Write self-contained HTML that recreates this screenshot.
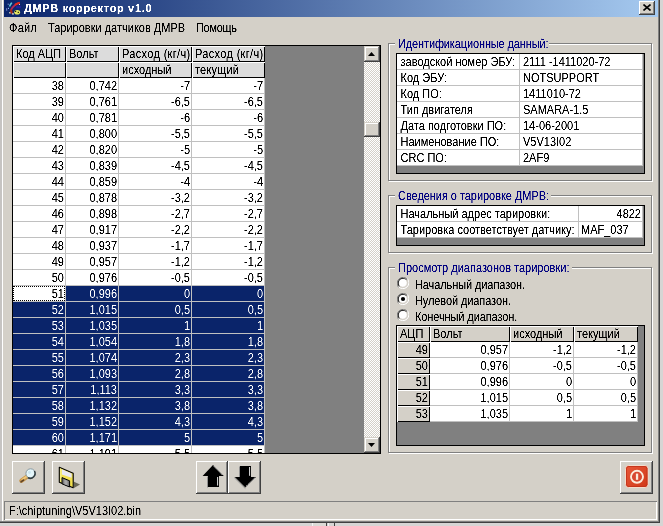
<!DOCTYPE html>
<html><head><meta charset="utf-8"><style>
html,body{margin:0;padding:0}
body{width:663px;height:526px;overflow:hidden;position:relative;background:#D4D0C8;font-family:"Liberation Sans",sans-serif;font-size:11px;color:#000}
div,svg{position:absolute}
.t{white-space:nowrap;transform:scaleY(1.12);transform-origin:0 3.5px}
.nt{transform:none}
</style></head><body>
<svg width="0" height="0" style="position:absolute;left:0;top:0"><filter id="crisp" x="0" y="0" width="100%" height="100%"><feComponentTransfer><feFuncA type="linear" slope="2.5" intercept="-0.6"/></feComponentTransfer></filter><filter id="crispw" x="0" y="0" width="100%" height="100%"><feComponentTransfer><feFuncA type="linear" slope="1.6" intercept="-0.35"/></feComponentTransfer></filter></svg>
<div style="left:0px;top:0px;width:2px;height:526px;background:#C6C4C2"></div>
<div style="left:2px;top:0px;width:1px;height:521px;background:#FFFFFF"></div>
<div style="left:658px;top:0px;width:1px;height:522px;background:#808080"></div>
<div style="left:659px;top:0px;width:1px;height:523px;background:#404040"></div>
<div style="left:0px;top:521px;width:659px;height:1px;background:#808080"></div>
<div style="left:0px;top:522px;width:660px;height:1px;background:#404040"></div>
<div style="left:660px;top:0px;width:3px;height:526px;background:#D6D5D4"></div>
<div style="left:0px;top:523px;width:663px;height:3px;background:#D6D5D4"></div>
<div style="left:312px;top:523px;width:1px;height:3px;background:#F4F4F4"></div>
<div style="left:313px;top:523px;width:13px;height:3px;background:#DCDAD6"></div>
<div style="left:326px;top:523px;width:1px;height:3px;background:#404040"></div>
<div style="left:328px;top:523px;width:1px;height:3px;background:#F4F4F4"></div>
<div style="left:334px;top:523px;width:1px;height:3px;background:#404040"></div>
<div style="left:4px;top:0px;width:654px;height:17px;background:linear-gradient(to right,#0A246A,#A6CAF0)"></div>
<svg style="position:absolute;left:5px;top:1px" width="16" height="15" viewBox="0 0 16 15">
<path d="M6.8 1.6 L5.5 3.5 L4.5 5.5" stroke="#60C8D8" stroke-width="1.6" fill="none"/>
<rect x="2.7" y="2.7" width="1" height="1" fill="#A0C0F0"/>
<rect x="3" y="6.8" width="1" height="1.2" fill="#90B0E8"/>
<rect x="1.2" y="7.2" width="1" height="2.5" fill="#8090D8"/>
<rect x="11" y="5" width="5" height="2.2" fill="#20209A"/>
<path d="M14.5 1.8 C12 2.5 9.5 4 7.6 6.4 C6 8.5 5.6 10.5 6.8 11.6" stroke="#B02858" stroke-width="1.8" fill="none"/>
<path d="M14.8 1.8 C13 2 11.5 2.8 10 3.8" stroke="#E02818" stroke-width="2" fill="none"/>
<path d="M6.2 8.5 C5.6 10.5 6.2 11.5 7.4 12.2" stroke="#A02818" stroke-width="2.2" fill="none"/>
<ellipse cx="12.2" cy="11.2" rx="2.9" ry="2.3" fill="#E8E860"/>
<rect x="10" y="9.8" width="1.2" height="1.2" fill="#202000"/>
<rect x="12.7" y="10.8" width="1.2" height="1.2" fill="#202000"/>
<path d="M4.2 11.5 L5.5 12.3 M7 12.8 L9 13" stroke="#F0F0D0" stroke-width="1.2" fill="none"/>
<rect x="14" y="3" width="1" height="1" fill="#D0E0F0"/>
</svg>
<div style="left:639px;top:1px;width:16px;height:14px;background:#D4D0C8;box-shadow:inset -1px -1px #404040,inset 1px 1px #fff,inset -2px -2px #808080"></div>
<svg style="position:absolute;left:643px;top:4px" width="8" height="7" viewBox="0 0 8 7">
<path d="M0.5 0.5 L7.5 6.5 M7.5 0.5 L0.5 6.5" stroke="#000" stroke-width="1.6"/>
</svg>
<div style="left:12px;top:45px;width:369px;height:409px;background:#808080;border:1px solid #000;box-sizing:border-box"></div>
<div style="left:13px;top:46px;width:53px;height:16px;background:#DCDCDC;box-shadow:inset 1px 1px #fff,inset -1px -1px #000"></div>
<div style="left:66px;top:46px;width:53px;height:16px;background:#DCDCDC;box-shadow:inset 1px 1px #fff,inset -1px -1px #000"></div>
<div style="left:119px;top:46px;width:73px;height:16px;background:#DCDCDC;box-shadow:inset 1px 1px #fff,inset -1px -1px #000"></div>
<div style="left:192px;top:46px;width:73px;height:16px;background:#DCDCDC;box-shadow:inset 1px 1px #fff,inset -1px -1px #000"></div>
<div style="left:13px;top:62px;width:53px;height:16px;background:#DCDCDC;box-shadow:inset 1px 1px #fff,inset -1px -1px #000"></div>
<div style="left:66px;top:62px;width:53px;height:16px;background:#DCDCDC;box-shadow:inset 1px 1px #fff,inset -1px -1px #000"></div>
<div style="left:119px;top:62px;width:73px;height:16px;background:#DCDCDC;box-shadow:inset 1px 1px #fff,inset -1px -1px #000"></div>
<div style="left:192px;top:62px;width:73px;height:16px;background:#DCDCDC;box-shadow:inset 1px 1px #fff,inset -1px -1px #000"></div>
<div style="left:13px;top:78px;width:252px;height:375px;overflow:hidden">
<div style="left:0px;top:0px;width:53px;height:16px;background:#fff;box-shadow:inset -1px -1px #C0C0C0"></div>
<div style="left:53px;top:0px;width:53px;height:16px;background:#fff;box-shadow:inset -1px -1px #C0C0C0"></div>
<div style="left:106px;top:0px;width:73px;height:16px;background:#fff;box-shadow:inset -1px -1px #C0C0C0"></div>
<div style="left:179px;top:0px;width:73px;height:16px;background:#fff;box-shadow:inset -1px -1px #C0C0C0"></div>
<div style="left:0px;top:16px;width:53px;height:16px;background:#fff;box-shadow:inset -1px -1px #C0C0C0"></div>
<div style="left:53px;top:16px;width:53px;height:16px;background:#fff;box-shadow:inset -1px -1px #C0C0C0"></div>
<div style="left:106px;top:16px;width:73px;height:16px;background:#fff;box-shadow:inset -1px -1px #C0C0C0"></div>
<div style="left:179px;top:16px;width:73px;height:16px;background:#fff;box-shadow:inset -1px -1px #C0C0C0"></div>
<div style="left:0px;top:32px;width:53px;height:16px;background:#fff;box-shadow:inset -1px -1px #C0C0C0"></div>
<div style="left:53px;top:32px;width:53px;height:16px;background:#fff;box-shadow:inset -1px -1px #C0C0C0"></div>
<div style="left:106px;top:32px;width:73px;height:16px;background:#fff;box-shadow:inset -1px -1px #C0C0C0"></div>
<div style="left:179px;top:32px;width:73px;height:16px;background:#fff;box-shadow:inset -1px -1px #C0C0C0"></div>
<div style="left:0px;top:48px;width:53px;height:16px;background:#fff;box-shadow:inset -1px -1px #C0C0C0"></div>
<div style="left:53px;top:48px;width:53px;height:16px;background:#fff;box-shadow:inset -1px -1px #C0C0C0"></div>
<div style="left:106px;top:48px;width:73px;height:16px;background:#fff;box-shadow:inset -1px -1px #C0C0C0"></div>
<div style="left:179px;top:48px;width:73px;height:16px;background:#fff;box-shadow:inset -1px -1px #C0C0C0"></div>
<div style="left:0px;top:64px;width:53px;height:16px;background:#fff;box-shadow:inset -1px -1px #C0C0C0"></div>
<div style="left:53px;top:64px;width:53px;height:16px;background:#fff;box-shadow:inset -1px -1px #C0C0C0"></div>
<div style="left:106px;top:64px;width:73px;height:16px;background:#fff;box-shadow:inset -1px -1px #C0C0C0"></div>
<div style="left:179px;top:64px;width:73px;height:16px;background:#fff;box-shadow:inset -1px -1px #C0C0C0"></div>
<div style="left:0px;top:80px;width:53px;height:16px;background:#fff;box-shadow:inset -1px -1px #C0C0C0"></div>
<div style="left:53px;top:80px;width:53px;height:16px;background:#fff;box-shadow:inset -1px -1px #C0C0C0"></div>
<div style="left:106px;top:80px;width:73px;height:16px;background:#fff;box-shadow:inset -1px -1px #C0C0C0"></div>
<div style="left:179px;top:80px;width:73px;height:16px;background:#fff;box-shadow:inset -1px -1px #C0C0C0"></div>
<div style="left:0px;top:96px;width:53px;height:16px;background:#fff;box-shadow:inset -1px -1px #C0C0C0"></div>
<div style="left:53px;top:96px;width:53px;height:16px;background:#fff;box-shadow:inset -1px -1px #C0C0C0"></div>
<div style="left:106px;top:96px;width:73px;height:16px;background:#fff;box-shadow:inset -1px -1px #C0C0C0"></div>
<div style="left:179px;top:96px;width:73px;height:16px;background:#fff;box-shadow:inset -1px -1px #C0C0C0"></div>
<div style="left:0px;top:112px;width:53px;height:16px;background:#fff;box-shadow:inset -1px -1px #C0C0C0"></div>
<div style="left:53px;top:112px;width:53px;height:16px;background:#fff;box-shadow:inset -1px -1px #C0C0C0"></div>
<div style="left:106px;top:112px;width:73px;height:16px;background:#fff;box-shadow:inset -1px -1px #C0C0C0"></div>
<div style="left:179px;top:112px;width:73px;height:16px;background:#fff;box-shadow:inset -1px -1px #C0C0C0"></div>
<div style="left:0px;top:128px;width:53px;height:16px;background:#fff;box-shadow:inset -1px -1px #C0C0C0"></div>
<div style="left:53px;top:128px;width:53px;height:16px;background:#fff;box-shadow:inset -1px -1px #C0C0C0"></div>
<div style="left:106px;top:128px;width:73px;height:16px;background:#fff;box-shadow:inset -1px -1px #C0C0C0"></div>
<div style="left:179px;top:128px;width:73px;height:16px;background:#fff;box-shadow:inset -1px -1px #C0C0C0"></div>
<div style="left:0px;top:144px;width:53px;height:16px;background:#fff;box-shadow:inset -1px -1px #C0C0C0"></div>
<div style="left:53px;top:144px;width:53px;height:16px;background:#fff;box-shadow:inset -1px -1px #C0C0C0"></div>
<div style="left:106px;top:144px;width:73px;height:16px;background:#fff;box-shadow:inset -1px -1px #C0C0C0"></div>
<div style="left:179px;top:144px;width:73px;height:16px;background:#fff;box-shadow:inset -1px -1px #C0C0C0"></div>
<div style="left:0px;top:160px;width:53px;height:16px;background:#fff;box-shadow:inset -1px -1px #C0C0C0"></div>
<div style="left:53px;top:160px;width:53px;height:16px;background:#fff;box-shadow:inset -1px -1px #C0C0C0"></div>
<div style="left:106px;top:160px;width:73px;height:16px;background:#fff;box-shadow:inset -1px -1px #C0C0C0"></div>
<div style="left:179px;top:160px;width:73px;height:16px;background:#fff;box-shadow:inset -1px -1px #C0C0C0"></div>
<div style="left:0px;top:176px;width:53px;height:16px;background:#fff;box-shadow:inset -1px -1px #C0C0C0"></div>
<div style="left:53px;top:176px;width:53px;height:16px;background:#fff;box-shadow:inset -1px -1px #C0C0C0"></div>
<div style="left:106px;top:176px;width:73px;height:16px;background:#fff;box-shadow:inset -1px -1px #C0C0C0"></div>
<div style="left:179px;top:176px;width:73px;height:16px;background:#fff;box-shadow:inset -1px -1px #C0C0C0"></div>
<div style="left:0px;top:192px;width:53px;height:16px;background:#fff;box-shadow:inset -1px -1px #C0C0C0"></div>
<div style="left:53px;top:192px;width:53px;height:16px;background:#fff;box-shadow:inset -1px -1px #C0C0C0"></div>
<div style="left:106px;top:192px;width:73px;height:16px;background:#fff;box-shadow:inset -1px -1px #C0C0C0"></div>
<div style="left:179px;top:192px;width:73px;height:16px;background:#fff;box-shadow:inset -1px -1px #C0C0C0"></div>
<div style="left:0px;top:208px;width:53px;height:16px;background:#fff;box-shadow:inset -1px -1px #C0C0C0"></div>
<div style="left:0px;top:208px;width:52px;height:15px;border:1px dotted #000;box-sizing:border-box"></div>
<div style="left:53px;top:208px;width:53px;height:16px;background:#0A246A;box-shadow:inset -1px -1px #C0C0C0"></div>
<div style="left:106px;top:208px;width:73px;height:16px;background:#0A246A;box-shadow:inset -1px -1px #C0C0C0"></div>
<div style="left:179px;top:208px;width:73px;height:16px;background:#0A246A;box-shadow:inset -1px -1px #C0C0C0"></div>
<div style="left:0px;top:224px;width:53px;height:16px;background:#0A246A;box-shadow:inset -1px -1px #C0C0C0"></div>
<div style="left:53px;top:224px;width:53px;height:16px;background:#0A246A;box-shadow:inset -1px -1px #C0C0C0"></div>
<div style="left:106px;top:224px;width:73px;height:16px;background:#0A246A;box-shadow:inset -1px -1px #C0C0C0"></div>
<div style="left:179px;top:224px;width:73px;height:16px;background:#0A246A;box-shadow:inset -1px -1px #C0C0C0"></div>
<div style="left:0px;top:240px;width:53px;height:16px;background:#0A246A;box-shadow:inset -1px -1px #C0C0C0"></div>
<div style="left:53px;top:240px;width:53px;height:16px;background:#0A246A;box-shadow:inset -1px -1px #C0C0C0"></div>
<div style="left:106px;top:240px;width:73px;height:16px;background:#0A246A;box-shadow:inset -1px -1px #C0C0C0"></div>
<div style="left:179px;top:240px;width:73px;height:16px;background:#0A246A;box-shadow:inset -1px -1px #C0C0C0"></div>
<div style="left:0px;top:256px;width:53px;height:16px;background:#0A246A;box-shadow:inset -1px -1px #C0C0C0"></div>
<div style="left:53px;top:256px;width:53px;height:16px;background:#0A246A;box-shadow:inset -1px -1px #C0C0C0"></div>
<div style="left:106px;top:256px;width:73px;height:16px;background:#0A246A;box-shadow:inset -1px -1px #C0C0C0"></div>
<div style="left:179px;top:256px;width:73px;height:16px;background:#0A246A;box-shadow:inset -1px -1px #C0C0C0"></div>
<div style="left:0px;top:272px;width:53px;height:16px;background:#0A246A;box-shadow:inset -1px -1px #C0C0C0"></div>
<div style="left:53px;top:272px;width:53px;height:16px;background:#0A246A;box-shadow:inset -1px -1px #C0C0C0"></div>
<div style="left:106px;top:272px;width:73px;height:16px;background:#0A246A;box-shadow:inset -1px -1px #C0C0C0"></div>
<div style="left:179px;top:272px;width:73px;height:16px;background:#0A246A;box-shadow:inset -1px -1px #C0C0C0"></div>
<div style="left:0px;top:288px;width:53px;height:16px;background:#0A246A;box-shadow:inset -1px -1px #C0C0C0"></div>
<div style="left:53px;top:288px;width:53px;height:16px;background:#0A246A;box-shadow:inset -1px -1px #C0C0C0"></div>
<div style="left:106px;top:288px;width:73px;height:16px;background:#0A246A;box-shadow:inset -1px -1px #C0C0C0"></div>
<div style="left:179px;top:288px;width:73px;height:16px;background:#0A246A;box-shadow:inset -1px -1px #C0C0C0"></div>
<div style="left:0px;top:304px;width:53px;height:16px;background:#0A246A;box-shadow:inset -1px -1px #C0C0C0"></div>
<div style="left:53px;top:304px;width:53px;height:16px;background:#0A246A;box-shadow:inset -1px -1px #C0C0C0"></div>
<div style="left:106px;top:304px;width:73px;height:16px;background:#0A246A;box-shadow:inset -1px -1px #C0C0C0"></div>
<div style="left:179px;top:304px;width:73px;height:16px;background:#0A246A;box-shadow:inset -1px -1px #C0C0C0"></div>
<div style="left:0px;top:320px;width:53px;height:16px;background:#0A246A;box-shadow:inset -1px -1px #C0C0C0"></div>
<div style="left:53px;top:320px;width:53px;height:16px;background:#0A246A;box-shadow:inset -1px -1px #C0C0C0"></div>
<div style="left:106px;top:320px;width:73px;height:16px;background:#0A246A;box-shadow:inset -1px -1px #C0C0C0"></div>
<div style="left:179px;top:320px;width:73px;height:16px;background:#0A246A;box-shadow:inset -1px -1px #C0C0C0"></div>
<div style="left:0px;top:336px;width:53px;height:16px;background:#0A246A;box-shadow:inset -1px -1px #C0C0C0"></div>
<div style="left:53px;top:336px;width:53px;height:16px;background:#0A246A;box-shadow:inset -1px -1px #C0C0C0"></div>
<div style="left:106px;top:336px;width:73px;height:16px;background:#0A246A;box-shadow:inset -1px -1px #C0C0C0"></div>
<div style="left:179px;top:336px;width:73px;height:16px;background:#0A246A;box-shadow:inset -1px -1px #C0C0C0"></div>
<div style="left:0px;top:352px;width:53px;height:16px;background:#0A246A;box-shadow:inset -1px -1px #C0C0C0"></div>
<div style="left:53px;top:352px;width:53px;height:16px;background:#0A246A;box-shadow:inset -1px -1px #C0C0C0"></div>
<div style="left:106px;top:352px;width:73px;height:16px;background:#0A246A;box-shadow:inset -1px -1px #C0C0C0"></div>
<div style="left:179px;top:352px;width:73px;height:16px;background:#0A246A;box-shadow:inset -1px -1px #C0C0C0"></div>
<div style="left:0px;top:368px;width:53px;height:16px;background:#fff;box-shadow:inset -1px -1px #C0C0C0"></div>
<div style="left:53px;top:368px;width:53px;height:16px;background:#fff;box-shadow:inset -1px -1px #C0C0C0"></div>
<div style="left:106px;top:368px;width:73px;height:16px;background:#fff;box-shadow:inset -1px -1px #C0C0C0"></div>
<div style="left:179px;top:368px;width:73px;height:16px;background:#fff;box-shadow:inset -1px -1px #C0C0C0"></div>
</div>
<div style="left:364px;top:46px;width:16px;height:407px;background-color:#fff;background-image:conic-gradient(#D4D0C8 25%,#fff 0 50%,#D4D0C8 0 75%,#fff 0);background-size:2px 2px"></div>
<div style="left:364px;top:46px;width:16px;height:16px;background:#D4D0C8;box-shadow:inset -1px -1px #404040,inset 1px 1px #D4D0C8,inset -2px -2px #808080,inset 2px 2px #fff"></div>
<svg style="position:absolute;left:368px;top:52px" width="7" height="4"><path d="M3.5 0 L7 4 L0 4Z" fill="#000"/></svg>
<div style="left:364px;top:437px;width:16px;height:16px;background:#D4D0C8;box-shadow:inset -1px -1px #404040,inset 1px 1px #D4D0C8,inset -2px -2px #808080,inset 2px 2px #fff"></div>
<svg style="position:absolute;left:368px;top:443px" width="7" height="4"><path d="M0 0 L7 0 L3.5 4Z" fill="#000"/></svg>
<div style="left:364px;top:122px;width:16px;height:15px;background:#D4D0C8;box-shadow:inset -1px -1px #404040,inset 1px 1px #D4D0C8,inset -2px -2px #808080,inset 2px 2px #fff"></div>
<div style="left:388px;top:43px;width:264px;height:138px;border:1px solid #808080;box-sizing:border-box"></div>
<div style="left:389px;top:44px;width:264px;height:138px;border:1px solid #fff;box-sizing:border-box"></div>
<div style="left:388px;top:44px;width:1px;height:136px;background:#808080"></div>
<div style="left:651px;top:43px;width:1px;height:138px;background:#808080"></div>
<div style="left:388px;top:43px;width:264px;height:1px;background:#808080"></div>
<div style="left:388px;top:180px;width:264px;height:1px;background:#808080"></div>
<div style="left:395px;top:37px;width:154px;height:14px;background:#D4D0C8"></div>
<div style="left:388px;top:195px;width:264px;height:58px;border:1px solid #808080;box-sizing:border-box"></div>
<div style="left:389px;top:196px;width:264px;height:58px;border:1px solid #fff;box-sizing:border-box"></div>
<div style="left:388px;top:196px;width:1px;height:56px;background:#808080"></div>
<div style="left:651px;top:195px;width:1px;height:58px;background:#808080"></div>
<div style="left:388px;top:195px;width:264px;height:1px;background:#808080"></div>
<div style="left:388px;top:252px;width:264px;height:1px;background:#808080"></div>
<div style="left:395px;top:189px;width:156px;height:14px;background:#D4D0C8"></div>
<div style="left:388px;top:267px;width:264px;height:186px;border:1px solid #808080;box-sizing:border-box"></div>
<div style="left:389px;top:268px;width:264px;height:186px;border:1px solid #fff;box-sizing:border-box"></div>
<div style="left:388px;top:268px;width:1px;height:184px;background:#808080"></div>
<div style="left:651px;top:267px;width:1px;height:186px;background:#808080"></div>
<div style="left:388px;top:267px;width:264px;height:1px;background:#808080"></div>
<div style="left:388px;top:452px;width:264px;height:1px;background:#808080"></div>
<div style="left:395px;top:261px;width:177px;height:14px;background:#D4D0C8"></div>
<div style="left:396px;top:53px;width:249px;height:121px;background:#808080;border:1px solid #000;box-sizing:border-box"></div>
<div style="left:397px;top:54px;width:123px;height:16px;background:#fff;box-shadow:inset -1px -1px #C0C0C0"></div>
<div style="left:520px;top:54px;width:123px;height:16px;background:#fff;box-shadow:inset -1px -1px #C0C0C0"></div>
<div style="left:397px;top:70px;width:123px;height:16px;background:#fff;box-shadow:inset -1px -1px #C0C0C0"></div>
<div style="left:520px;top:70px;width:123px;height:16px;background:#fff;box-shadow:inset -1px -1px #C0C0C0"></div>
<div style="left:397px;top:86px;width:123px;height:16px;background:#fff;box-shadow:inset -1px -1px #C0C0C0"></div>
<div style="left:520px;top:86px;width:123px;height:16px;background:#fff;box-shadow:inset -1px -1px #C0C0C0"></div>
<div style="left:397px;top:102px;width:123px;height:16px;background:#fff;box-shadow:inset -1px -1px #C0C0C0"></div>
<div style="left:520px;top:102px;width:123px;height:16px;background:#fff;box-shadow:inset -1px -1px #C0C0C0"></div>
<div style="left:397px;top:118px;width:123px;height:16px;background:#fff;box-shadow:inset -1px -1px #C0C0C0"></div>
<div style="left:520px;top:118px;width:123px;height:16px;background:#fff;box-shadow:inset -1px -1px #C0C0C0"></div>
<div style="left:397px;top:134px;width:123px;height:16px;background:#fff;box-shadow:inset -1px -1px #C0C0C0"></div>
<div style="left:520px;top:134px;width:123px;height:16px;background:#fff;box-shadow:inset -1px -1px #C0C0C0"></div>
<div style="left:397px;top:150px;width:123px;height:16px;background:#fff;box-shadow:inset -1px -1px #C0C0C0"></div>
<div style="left:520px;top:150px;width:123px;height:16px;background:#fff;box-shadow:inset -1px -1px #C0C0C0"></div>
<div style="left:396px;top:205px;width:249px;height:41px;background:#808080;border:1px solid #000;box-sizing:border-box"></div>
<div style="left:397px;top:206px;width:182px;height:16px;background:#fff;box-shadow:inset -1px -1px #C0C0C0"></div>
<div style="left:579px;top:206px;width:64px;height:16px;background:#fff;box-shadow:inset -1px -1px #C0C0C0"></div>
<div style="left:397px;top:222px;width:182px;height:16px;background:#fff;box-shadow:inset -1px -1px #C0C0C0"></div>
<div style="left:579px;top:222px;width:64px;height:16px;background:#fff;box-shadow:inset -1px -1px #C0C0C0"></div>
<svg style="position:absolute;left:397px;top:277px" width="12" height="12" viewBox="0 0 12 12">
<path d="M10.5 2.3 A5.5 5.5 0 0 0 1.7 10.5" stroke="#808080" stroke-width="1" fill="none"/>
<path d="M9.5 3 A4.5 4.5 0 0 0 2.5 9.5" stroke="#303030" stroke-width="1.2" fill="none"/>
<circle cx="6" cy="6" r="4" fill="#fff"/>
<path d="M1.5 9.7 A5.5 5.5 0 0 0 10.3 1.5" stroke="#fff" stroke-width="1" fill="none"/>
<path d="M2.5 9 A4.5 4.5 0 0 0 9 2.5" stroke="#D4D0C8" stroke-width="1" fill="none"/>

</svg>
<svg style="position:absolute;left:397px;top:293px" width="12" height="12" viewBox="0 0 12 12">
<path d="M10.5 2.3 A5.5 5.5 0 0 0 1.7 10.5" stroke="#808080" stroke-width="1" fill="none"/>
<path d="M9.5 3 A4.5 4.5 0 0 0 2.5 9.5" stroke="#303030" stroke-width="1.2" fill="none"/>
<circle cx="6" cy="6" r="4" fill="#fff"/>
<path d="M1.5 9.7 A5.5 5.5 0 0 0 10.3 1.5" stroke="#fff" stroke-width="1" fill="none"/>
<path d="M2.5 9 A4.5 4.5 0 0 0 9 2.5" stroke="#D4D0C8" stroke-width="1" fill="none"/>
<circle cx="6" cy="6" r="2.1" fill="#000"/>
</svg>
<svg style="position:absolute;left:397px;top:309px" width="12" height="12" viewBox="0 0 12 12">
<path d="M10.5 2.3 A5.5 5.5 0 0 0 1.7 10.5" stroke="#808080" stroke-width="1" fill="none"/>
<path d="M9.5 3 A4.5 4.5 0 0 0 2.5 9.5" stroke="#303030" stroke-width="1.2" fill="none"/>
<circle cx="6" cy="6" r="4" fill="#fff"/>
<path d="M1.5 9.7 A5.5 5.5 0 0 0 10.3 1.5" stroke="#fff" stroke-width="1" fill="none"/>
<path d="M2.5 9 A4.5 4.5 0 0 0 9 2.5" stroke="#D4D0C8" stroke-width="1" fill="none"/>

</svg>
<div style="left:396px;top:325px;width:249px;height:121px;background:#808080;border:1px solid #000;box-sizing:border-box"></div>
<div style="left:397px;top:326px;width:33px;height:16px;background:#D4D0C8;box-shadow:inset 1px 1px #fff,inset -1px -1px #000"></div>
<div style="left:430px;top:326px;width:80px;height:16px;background:#D4D0C8;box-shadow:inset 1px 1px #fff,inset -1px -1px #000"></div>
<div style="left:510px;top:326px;width:64px;height:16px;background:#D4D0C8;box-shadow:inset 1px 1px #fff,inset -1px -1px #000"></div>
<div style="left:574px;top:326px;width:64px;height:16px;background:#D4D0C8;box-shadow:inset 1px 1px #fff,inset -1px -1px #000"></div>
<div style="left:397px;top:342px;width:33px;height:16px;background:#D4D0C8;box-shadow:inset 1px 1px #fff,inset -1px -1px #000"></div>
<div style="left:430px;top:342px;width:80px;height:16px;background:#fff;box-shadow:inset -1px -1px #C0C0C0"></div>
<div style="left:510px;top:342px;width:64px;height:16px;background:#fff;box-shadow:inset -1px -1px #C0C0C0"></div>
<div style="left:574px;top:342px;width:64px;height:16px;background:#fff;box-shadow:inset -1px -1px #C0C0C0"></div>
<div style="left:397px;top:358px;width:33px;height:16px;background:#D4D0C8;box-shadow:inset 1px 1px #fff,inset -1px -1px #000"></div>
<div style="left:430px;top:358px;width:80px;height:16px;background:#fff;box-shadow:inset -1px -1px #C0C0C0"></div>
<div style="left:510px;top:358px;width:64px;height:16px;background:#fff;box-shadow:inset -1px -1px #C0C0C0"></div>
<div style="left:574px;top:358px;width:64px;height:16px;background:#fff;box-shadow:inset -1px -1px #C0C0C0"></div>
<div style="left:397px;top:374px;width:33px;height:16px;background:#D4D0C8;box-shadow:inset 1px 1px #fff,inset -1px -1px #000"></div>
<div style="left:430px;top:374px;width:80px;height:16px;background:#fff;box-shadow:inset -1px -1px #C0C0C0"></div>
<div style="left:510px;top:374px;width:64px;height:16px;background:#fff;box-shadow:inset -1px -1px #C0C0C0"></div>
<div style="left:574px;top:374px;width:64px;height:16px;background:#fff;box-shadow:inset -1px -1px #C0C0C0"></div>
<div style="left:397px;top:390px;width:33px;height:16px;background:#D4D0C8;box-shadow:inset 1px 1px #fff,inset -1px -1px #000"></div>
<div style="left:430px;top:390px;width:80px;height:16px;background:#fff;box-shadow:inset -1px -1px #C0C0C0"></div>
<div style="left:510px;top:390px;width:64px;height:16px;background:#fff;box-shadow:inset -1px -1px #C0C0C0"></div>
<div style="left:574px;top:390px;width:64px;height:16px;background:#fff;box-shadow:inset -1px -1px #C0C0C0"></div>
<div style="left:397px;top:406px;width:33px;height:16px;background:#D4D0C8;box-shadow:inset 1px 1px #fff,inset -1px -1px #000"></div>
<div style="left:430px;top:406px;width:80px;height:16px;background:#fff;box-shadow:inset -1px -1px #C0C0C0"></div>
<div style="left:510px;top:406px;width:64px;height:16px;background:#fff;box-shadow:inset -1px -1px #C0C0C0"></div>
<div style="left:574px;top:406px;width:64px;height:16px;background:#fff;box-shadow:inset -1px -1px #C0C0C0"></div>
<div style="left:12px;top:461px;width:33px;height:33px;background:#D4D0C8;box-shadow:inset -1px -1px #404040,inset 1px 1px #fff,inset -2px -2px #808080"></div>
<div style="left:52px;top:461px;width:33px;height:33px;background:#D4D0C8;box-shadow:inset -1px -1px #404040,inset 1px 1px #fff,inset -2px -2px #808080"></div>
<div style="left:196px;top:461px;width:32px;height:33px;background:#D4D0C8;box-shadow:inset -1px -1px #404040,inset 1px 1px #fff,inset -2px -2px #808080"></div>
<div style="left:228px;top:461px;width:33px;height:33px;background:#D4D0C8;box-shadow:inset -1px -1px #404040,inset 1px 1px #fff,inset -2px -2px #808080"></div>
<div style="left:620px;top:461px;width:33px;height:33px;background:#D4D0C8;box-shadow:inset -1px -1px #404040,inset 1px 1px #fff,inset -2px -2px #808080"></div>
<svg style="position:absolute;left:12px;top:461px" width="33" height="33" viewBox="0 0 33 33">
<path d="M9.4 19.8 L14.6 16" stroke="#C89850" stroke-width="4.4" stroke-linecap="round"/>
<path d="M10.4 18.6 L14.2 15.8" stroke="#F0C878" stroke-width="2" stroke-linecap="round"/>
<path d="M9 20.8 L11.6 19" stroke="#604428" stroke-width="1.6" stroke-linecap="round"/>
<circle cx="18.6" cy="12.5" r="4.7" fill="#E4F6FA" stroke="#8898A0" stroke-width="1"/>
<path d="M22.4 10 A4.9 4.9 0 0 1 16 16.8" stroke="#303c40" stroke-width="1.5" fill="none"/>
<circle cx="17.5" cy="11.5" r="1.4" fill="#B8D8E8" opacity="0.6"/>
</svg>
<svg style="position:absolute;left:52px;top:461px" width="33" height="33" viewBox="0 0 33 33">
<path d="M21.5 20.5 L28 23.5 L22 27Z" fill="#6A6858"/>
<path d="M7.3 6.3 L21.2 12.3 L21.2 26.8 L7.3 21.2Z" fill="#F2E050" stroke="#000" stroke-width="1.1" stroke-linejoin="round"/>
<path d="M9.8 8.2 L19.6 12.4 L19.6 16.8 L9.8 13.4Z" fill="#E8E8F4"/>
<path d="M8 7.2 L9.5 8 L9.5 21 L8 20.5Z" fill="#F8F080"/>
<path d="M10 16.6 L17.6 19.8 L17.6 26 L10 22.8Z" fill="#787878" stroke="#000" stroke-width="1"/>
<path d="M12.3 18.4 L15.6 19.8 L15.6 24.5 L12.3 23.2Z" fill="#A8A8A8"/>
</svg>
<svg style="position:absolute;left:196px;top:461px" width="32" height="33" viewBox="0 0 32 33">
<path d="M11.5 15.5 L11.5 26.5" stroke="#909090" stroke-width="1"/>
<path d="M6.6 15 L17 4 L27.8 15 L23 15 L23 26 L12 26 L12 15Z" fill="#000"/>
<path d="M17.6 5 L26.4 14" stroke="#fff" stroke-width="0.9" stroke-dasharray="1 0.6"/>
<path d="M21.6 16 L21.6 24.6" stroke="#fff" stroke-width="0.9"/>
</svg>
<svg style="position:absolute;left:228px;top:461px" width="33" height="33" viewBox="0 0 33 33">
<path d="M11.5 5.5 L11.5 16" stroke="#909090" stroke-width="1"/>
<path d="M6.2 16.5 L17.3 27.5" stroke="#909090" stroke-width="1"/>
<path d="M12 5 L23 5 L23 16 L28 16 L17.4 26.6 L6.8 16 L12 16Z" fill="#000"/>
<path d="M21.6 6 L21.6 14.8" stroke="#fff" stroke-width="0.9"/>
<path d="M26.6 17 L17.8 25.6" stroke="#fff" stroke-width="0.9" stroke-dasharray="1 0.6"/>
</svg>
<svg style="position:absolute;left:620px;top:461px" width="33" height="33" viewBox="0 0 33 33">
<defs><linearGradient id="rg" x1="0" y1="0" x2="1" y2="1"><stop offset="0" stop-color="#E85838"/><stop offset="1" stop-color="#D03818"/></linearGradient></defs>
<rect x="5.5" y="4.5" width="22.5" height="22" rx="3" fill="url(#rg)" stroke="#F4DCCC" stroke-width="1"/>
<rect x="6.5" y="5.5" width="20.5" height="20" rx="2.2" fill="none" stroke="#C03018" stroke-width="0.8"/>
<circle cx="17" cy="15.8" r="6" fill="#D84830" stroke="#FAEBDC" stroke-width="1.9"/>
<rect x="15.9" y="12.6" width="2.3" height="6.2" fill="#FAEBDC"/>
</svg>
<div style="left:4px;top:501px;width:653px;height:19px;box-shadow:inset 1px 1px #808080,inset -1px -1px #fff"></div>
<div style="left:0;top:0;width:663px;height:526px;filter:url(#crisp)">
<div class="t" style="left:24px;top:1px;height:15px;line-height:15px;text-align:left;color:#fff;font-weight:bold;letter-spacing:0.66px;transform:none">ДМРВ корректор v1.0</div>
<div class="t" style="left:9px;top:20px;height:15px;line-height:15px;text-align:left;letter-spacing:0.3px">Файл</div>
<div class="t" style="left:48px;top:20px;height:15px;line-height:15px;text-align:left;">Тарировки датчиков ДМРВ</div>
<div class="t" style="left:196px;top:20px;height:15px;line-height:15px;text-align:left;letter-spacing:-0.3px">Помощь</div>
<div class="t" style="left:16px;top:46px;height:15px;line-height:15px;text-align:left;letter-spacing:0px">Код АЦП</div>
<div class="t" style="left:69px;top:46px;height:15px;line-height:15px;text-align:left;letter-spacing:0px">Вольт</div>
<div class="t" style="left:122px;top:46px;height:15px;line-height:15px;text-align:left;letter-spacing:0.33px">Расход (кг/ч)</div>
<div class="t" style="left:195px;top:46px;height:15px;line-height:15px;text-align:left;letter-spacing:0.33px">Расход (кг/ч)</div>
<div class="t" style="left:122px;top:62px;height:15px;line-height:15px;text-align:left;letter-spacing:0px">исходный</div>
<div class="t" style="left:195px;top:62px;height:15px;line-height:15px;text-align:left;letter-spacing:0.2px">текущий</div>
<div style="left:13px;top:78px;width:252px;height:375px;overflow:hidden">
<div class="t" style="left:0px;top:0px;width:51px;height:15px;line-height:15px;text-align:right;color:#000">38</div>
<div class="t" style="left:53px;top:0px;width:51px;height:15px;line-height:15px;text-align:right;color:#000">0,742</div>
<div class="t" style="left:106px;top:0px;width:71px;height:15px;line-height:15px;text-align:right;color:#000">-7</div>
<div class="t" style="left:179px;top:0px;width:71px;height:15px;line-height:15px;text-align:right;color:#000">-7</div>
<div class="t" style="left:0px;top:16px;width:51px;height:15px;line-height:15px;text-align:right;color:#000">39</div>
<div class="t" style="left:53px;top:16px;width:51px;height:15px;line-height:15px;text-align:right;color:#000">0,761</div>
<div class="t" style="left:106px;top:16px;width:71px;height:15px;line-height:15px;text-align:right;color:#000">-6,5</div>
<div class="t" style="left:179px;top:16px;width:71px;height:15px;line-height:15px;text-align:right;color:#000">-6,5</div>
<div class="t" style="left:0px;top:32px;width:51px;height:15px;line-height:15px;text-align:right;color:#000">40</div>
<div class="t" style="left:53px;top:32px;width:51px;height:15px;line-height:15px;text-align:right;color:#000">0,781</div>
<div class="t" style="left:106px;top:32px;width:71px;height:15px;line-height:15px;text-align:right;color:#000">-6</div>
<div class="t" style="left:179px;top:32px;width:71px;height:15px;line-height:15px;text-align:right;color:#000">-6</div>
<div class="t" style="left:0px;top:48px;width:51px;height:15px;line-height:15px;text-align:right;color:#000">41</div>
<div class="t" style="left:53px;top:48px;width:51px;height:15px;line-height:15px;text-align:right;color:#000">0,800</div>
<div class="t" style="left:106px;top:48px;width:71px;height:15px;line-height:15px;text-align:right;color:#000">-5,5</div>
<div class="t" style="left:179px;top:48px;width:71px;height:15px;line-height:15px;text-align:right;color:#000">-5,5</div>
<div class="t" style="left:0px;top:64px;width:51px;height:15px;line-height:15px;text-align:right;color:#000">42</div>
<div class="t" style="left:53px;top:64px;width:51px;height:15px;line-height:15px;text-align:right;color:#000">0,820</div>
<div class="t" style="left:106px;top:64px;width:71px;height:15px;line-height:15px;text-align:right;color:#000">-5</div>
<div class="t" style="left:179px;top:64px;width:71px;height:15px;line-height:15px;text-align:right;color:#000">-5</div>
<div class="t" style="left:0px;top:80px;width:51px;height:15px;line-height:15px;text-align:right;color:#000">43</div>
<div class="t" style="left:53px;top:80px;width:51px;height:15px;line-height:15px;text-align:right;color:#000">0,839</div>
<div class="t" style="left:106px;top:80px;width:71px;height:15px;line-height:15px;text-align:right;color:#000">-4,5</div>
<div class="t" style="left:179px;top:80px;width:71px;height:15px;line-height:15px;text-align:right;color:#000">-4,5</div>
<div class="t" style="left:0px;top:96px;width:51px;height:15px;line-height:15px;text-align:right;color:#000">44</div>
<div class="t" style="left:53px;top:96px;width:51px;height:15px;line-height:15px;text-align:right;color:#000">0,859</div>
<div class="t" style="left:106px;top:96px;width:71px;height:15px;line-height:15px;text-align:right;color:#000">-4</div>
<div class="t" style="left:179px;top:96px;width:71px;height:15px;line-height:15px;text-align:right;color:#000">-4</div>
<div class="t" style="left:0px;top:112px;width:51px;height:15px;line-height:15px;text-align:right;color:#000">45</div>
<div class="t" style="left:53px;top:112px;width:51px;height:15px;line-height:15px;text-align:right;color:#000">0,878</div>
<div class="t" style="left:106px;top:112px;width:71px;height:15px;line-height:15px;text-align:right;color:#000">-3,2</div>
<div class="t" style="left:179px;top:112px;width:71px;height:15px;line-height:15px;text-align:right;color:#000">-3,2</div>
<div class="t" style="left:0px;top:128px;width:51px;height:15px;line-height:15px;text-align:right;color:#000">46</div>
<div class="t" style="left:53px;top:128px;width:51px;height:15px;line-height:15px;text-align:right;color:#000">0,898</div>
<div class="t" style="left:106px;top:128px;width:71px;height:15px;line-height:15px;text-align:right;color:#000">-2,7</div>
<div class="t" style="left:179px;top:128px;width:71px;height:15px;line-height:15px;text-align:right;color:#000">-2,7</div>
<div class="t" style="left:0px;top:144px;width:51px;height:15px;line-height:15px;text-align:right;color:#000">47</div>
<div class="t" style="left:53px;top:144px;width:51px;height:15px;line-height:15px;text-align:right;color:#000">0,917</div>
<div class="t" style="left:106px;top:144px;width:71px;height:15px;line-height:15px;text-align:right;color:#000">-2,2</div>
<div class="t" style="left:179px;top:144px;width:71px;height:15px;line-height:15px;text-align:right;color:#000">-2,2</div>
<div class="t" style="left:0px;top:160px;width:51px;height:15px;line-height:15px;text-align:right;color:#000">48</div>
<div class="t" style="left:53px;top:160px;width:51px;height:15px;line-height:15px;text-align:right;color:#000">0,937</div>
<div class="t" style="left:106px;top:160px;width:71px;height:15px;line-height:15px;text-align:right;color:#000">-1,7</div>
<div class="t" style="left:179px;top:160px;width:71px;height:15px;line-height:15px;text-align:right;color:#000">-1,7</div>
<div class="t" style="left:0px;top:176px;width:51px;height:15px;line-height:15px;text-align:right;color:#000">49</div>
<div class="t" style="left:53px;top:176px;width:51px;height:15px;line-height:15px;text-align:right;color:#000">0,957</div>
<div class="t" style="left:106px;top:176px;width:71px;height:15px;line-height:15px;text-align:right;color:#000">-1,2</div>
<div class="t" style="left:179px;top:176px;width:71px;height:15px;line-height:15px;text-align:right;color:#000">-1,2</div>
<div class="t" style="left:0px;top:192px;width:51px;height:15px;line-height:15px;text-align:right;color:#000">50</div>
<div class="t" style="left:53px;top:192px;width:51px;height:15px;line-height:15px;text-align:right;color:#000">0,976</div>
<div class="t" style="left:106px;top:192px;width:71px;height:15px;line-height:15px;text-align:right;color:#000">-0,5</div>
<div class="t" style="left:179px;top:192px;width:71px;height:15px;line-height:15px;text-align:right;color:#000">-0,5</div>
<div class="t" style="left:0px;top:208px;width:51px;height:15px;line-height:15px;text-align:right;color:#000">51</div>
<div class="t" style="left:0px;top:368px;width:51px;height:15px;line-height:15px;text-align:right;color:#000">61</div>
<div class="t" style="left:53px;top:368px;width:51px;height:15px;line-height:15px;text-align:right;color:#000">1,191</div>
<div class="t" style="left:106px;top:368px;width:71px;height:15px;line-height:15px;text-align:right;color:#000">5,5</div>
<div class="t" style="left:179px;top:368px;width:71px;height:15px;line-height:15px;text-align:right;color:#000">5,5</div>
</div>
<div class="t" style="left:398px;top:36px;height:15px;line-height:15px;text-align:left;color:#000080;letter-spacing:-0.13px">Идентификационные данный:</div>
<div class="t" style="left:398px;top:188px;height:15px;line-height:15px;text-align:left;color:#000080;letter-spacing:-0.05px">Сведения о тарировке ДМРВ:</div>
<div class="t" style="left:398px;top:260px;height:15px;line-height:15px;text-align:left;color:#000080;letter-spacing:0px">Просмотр диапазонов тарировки:</div>
<div class="t" style="left:400.5px;top:54px;height:15px;line-height:15px;text-align:left;">заводской номер ЭБУ:</div>
<div class="t" style="left:523px;top:54px;height:15px;line-height:15px;text-align:left;">2111 -1411020-72</div>
<div class="t" style="left:400.5px;top:70px;height:15px;line-height:15px;text-align:left;">Код ЭБУ:</div>
<div class="t" style="left:523px;top:70px;height:15px;line-height:15px;text-align:left;">NOTSUPPORT</div>
<div class="t" style="left:400.5px;top:86px;height:15px;line-height:15px;text-align:left;">Код ПО:</div>
<div class="t" style="left:523px;top:86px;height:15px;line-height:15px;text-align:left;">1411010-72</div>
<div class="t" style="left:400.5px;top:102px;height:15px;line-height:15px;text-align:left;">Тип двигателя</div>
<div class="t" style="left:523px;top:102px;height:15px;line-height:15px;text-align:left;">SAMARA-1.5</div>
<div class="t" style="left:400.5px;top:118px;height:15px;line-height:15px;text-align:left;">Дата подготовки ПО:</div>
<div class="t" style="left:523px;top:118px;height:15px;line-height:15px;text-align:left;">14-06-2001</div>
<div class="t" style="left:400.5px;top:134px;height:15px;line-height:15px;text-align:left;">Наименование ПО:</div>
<div class="t" style="left:523px;top:134px;height:15px;line-height:15px;text-align:left;">V5V13I02</div>
<div class="t" style="left:400.5px;top:150px;height:15px;line-height:15px;text-align:left;">CRC ПО:</div>
<div class="t" style="left:523px;top:150px;height:15px;line-height:15px;text-align:left;">2AF9</div>
<div class="t" style="left:400.5px;top:206px;height:15px;line-height:15px;text-align:left;">Начальный адрес тарировки:</div>
<div class="t" style="left:579px;top:206px;width:62px;height:15px;line-height:15px;text-align:right;">4822</div>
<div class="t" style="left:400.5px;top:222px;height:15px;line-height:15px;text-align:left;">Тарировка соответствует датчику:</div>
<div class="t" style="left:581px;top:222px;height:15px;line-height:15px;text-align:left;">MAF_037</div>
<div class="t" style="left:415px;top:277px;height:15px;line-height:15px;text-align:left;letter-spacing:-0.1px">Начальный диапазон.</div>
<div class="t" style="left:415px;top:293px;height:15px;line-height:15px;text-align:left;letter-spacing:-0.1px">Нулевой диапазон.</div>
<div class="t" style="left:415px;top:309px;height:15px;line-height:15px;text-align:left;letter-spacing:-0.1px">Конечный диапазон.</div>
<div class="t" style="left:400px;top:326px;height:15px;line-height:15px;text-align:left;">АЦП</div>
<div class="t" style="left:433px;top:326px;height:15px;line-height:15px;text-align:left;">Вольт</div>
<div class="t" style="left:513px;top:326px;height:15px;line-height:15px;text-align:left;">исходный</div>
<div class="t" style="left:577px;top:326px;height:15px;line-height:15px;text-align:left;">текущий</div>
<div class="t" style="left:397px;top:342px;width:31px;height:15px;line-height:15px;text-align:right;">49</div>
<div class="t" style="left:430px;top:342px;width:78px;height:15px;line-height:15px;text-align:right;">0,957</div>
<div class="t" style="left:510px;top:342px;width:62px;height:15px;line-height:15px;text-align:right;">-1,2</div>
<div class="t" style="left:574px;top:342px;width:62px;height:15px;line-height:15px;text-align:right;">-1,2</div>
<div class="t" style="left:397px;top:358px;width:31px;height:15px;line-height:15px;text-align:right;">50</div>
<div class="t" style="left:430px;top:358px;width:78px;height:15px;line-height:15px;text-align:right;">0,976</div>
<div class="t" style="left:510px;top:358px;width:62px;height:15px;line-height:15px;text-align:right;">-0,5</div>
<div class="t" style="left:574px;top:358px;width:62px;height:15px;line-height:15px;text-align:right;">-0,5</div>
<div class="t" style="left:397px;top:374px;width:31px;height:15px;line-height:15px;text-align:right;">51</div>
<div class="t" style="left:430px;top:374px;width:78px;height:15px;line-height:15px;text-align:right;">0,996</div>
<div class="t" style="left:510px;top:374px;width:62px;height:15px;line-height:15px;text-align:right;">0</div>
<div class="t" style="left:574px;top:374px;width:62px;height:15px;line-height:15px;text-align:right;">0</div>
<div class="t" style="left:397px;top:390px;width:31px;height:15px;line-height:15px;text-align:right;">52</div>
<div class="t" style="left:430px;top:390px;width:78px;height:15px;line-height:15px;text-align:right;">1,015</div>
<div class="t" style="left:510px;top:390px;width:62px;height:15px;line-height:15px;text-align:right;">0,5</div>
<div class="t" style="left:574px;top:390px;width:62px;height:15px;line-height:15px;text-align:right;">0,5</div>
<div class="t" style="left:397px;top:406px;width:31px;height:15px;line-height:15px;text-align:right;">53</div>
<div class="t" style="left:430px;top:406px;width:78px;height:15px;line-height:15px;text-align:right;">1,035</div>
<div class="t" style="left:510px;top:406px;width:62px;height:15px;line-height:15px;text-align:right;">1</div>
<div class="t" style="left:574px;top:406px;width:62px;height:15px;line-height:15px;text-align:right;">1</div>
<div class="t" style="left:9px;top:503px;height:15px;line-height:15px;text-align:left;">F:\chiptuning\V5V13I02.bin</div>
</div>
<div style="left:0;top:0;width:663px;height:526px;filter:url(#crispw)">
<div style="left:13px;top:78px;width:252px;height:375px;overflow:hidden">
<div class="t" style="left:53px;top:208px;width:51px;height:15px;line-height:15px;text-align:right;color:#fff">0,996</div>
<div class="t" style="left:106px;top:208px;width:71px;height:15px;line-height:15px;text-align:right;color:#fff">0</div>
<div class="t" style="left:179px;top:208px;width:71px;height:15px;line-height:15px;text-align:right;color:#fff">0</div>
<div class="t" style="left:0px;top:224px;width:51px;height:15px;line-height:15px;text-align:right;color:#fff">52</div>
<div class="t" style="left:53px;top:224px;width:51px;height:15px;line-height:15px;text-align:right;color:#fff">1,015</div>
<div class="t" style="left:106px;top:224px;width:71px;height:15px;line-height:15px;text-align:right;color:#fff">0,5</div>
<div class="t" style="left:179px;top:224px;width:71px;height:15px;line-height:15px;text-align:right;color:#fff">0,5</div>
<div class="t" style="left:0px;top:240px;width:51px;height:15px;line-height:15px;text-align:right;color:#fff">53</div>
<div class="t" style="left:53px;top:240px;width:51px;height:15px;line-height:15px;text-align:right;color:#fff">1,035</div>
<div class="t" style="left:106px;top:240px;width:71px;height:15px;line-height:15px;text-align:right;color:#fff">1</div>
<div class="t" style="left:179px;top:240px;width:71px;height:15px;line-height:15px;text-align:right;color:#fff">1</div>
<div class="t" style="left:0px;top:256px;width:51px;height:15px;line-height:15px;text-align:right;color:#fff">54</div>
<div class="t" style="left:53px;top:256px;width:51px;height:15px;line-height:15px;text-align:right;color:#fff">1,054</div>
<div class="t" style="left:106px;top:256px;width:71px;height:15px;line-height:15px;text-align:right;color:#fff">1,8</div>
<div class="t" style="left:179px;top:256px;width:71px;height:15px;line-height:15px;text-align:right;color:#fff">1,8</div>
<div class="t" style="left:0px;top:272px;width:51px;height:15px;line-height:15px;text-align:right;color:#fff">55</div>
<div class="t" style="left:53px;top:272px;width:51px;height:15px;line-height:15px;text-align:right;color:#fff">1,074</div>
<div class="t" style="left:106px;top:272px;width:71px;height:15px;line-height:15px;text-align:right;color:#fff">2,3</div>
<div class="t" style="left:179px;top:272px;width:71px;height:15px;line-height:15px;text-align:right;color:#fff">2,3</div>
<div class="t" style="left:0px;top:288px;width:51px;height:15px;line-height:15px;text-align:right;color:#fff">56</div>
<div class="t" style="left:53px;top:288px;width:51px;height:15px;line-height:15px;text-align:right;color:#fff">1,093</div>
<div class="t" style="left:106px;top:288px;width:71px;height:15px;line-height:15px;text-align:right;color:#fff">2,8</div>
<div class="t" style="left:179px;top:288px;width:71px;height:15px;line-height:15px;text-align:right;color:#fff">2,8</div>
<div class="t" style="left:0px;top:304px;width:51px;height:15px;line-height:15px;text-align:right;color:#fff">57</div>
<div class="t" style="left:53px;top:304px;width:51px;height:15px;line-height:15px;text-align:right;color:#fff">1,113</div>
<div class="t" style="left:106px;top:304px;width:71px;height:15px;line-height:15px;text-align:right;color:#fff">3,3</div>
<div class="t" style="left:179px;top:304px;width:71px;height:15px;line-height:15px;text-align:right;color:#fff">3,3</div>
<div class="t" style="left:0px;top:320px;width:51px;height:15px;line-height:15px;text-align:right;color:#fff">58</div>
<div class="t" style="left:53px;top:320px;width:51px;height:15px;line-height:15px;text-align:right;color:#fff">1,132</div>
<div class="t" style="left:106px;top:320px;width:71px;height:15px;line-height:15px;text-align:right;color:#fff">3,8</div>
<div class="t" style="left:179px;top:320px;width:71px;height:15px;line-height:15px;text-align:right;color:#fff">3,8</div>
<div class="t" style="left:0px;top:336px;width:51px;height:15px;line-height:15px;text-align:right;color:#fff">59</div>
<div class="t" style="left:53px;top:336px;width:51px;height:15px;line-height:15px;text-align:right;color:#fff">1,152</div>
<div class="t" style="left:106px;top:336px;width:71px;height:15px;line-height:15px;text-align:right;color:#fff">4,3</div>
<div class="t" style="left:179px;top:336px;width:71px;height:15px;line-height:15px;text-align:right;color:#fff">4,3</div>
<div class="t" style="left:0px;top:352px;width:51px;height:15px;line-height:15px;text-align:right;color:#fff">60</div>
<div class="t" style="left:53px;top:352px;width:51px;height:15px;line-height:15px;text-align:right;color:#fff">1,171</div>
<div class="t" style="left:106px;top:352px;width:71px;height:15px;line-height:15px;text-align:right;color:#fff">5</div>
<div class="t" style="left:179px;top:352px;width:71px;height:15px;line-height:15px;text-align:right;color:#fff">5</div>
</div>
</div>
</body></html>
